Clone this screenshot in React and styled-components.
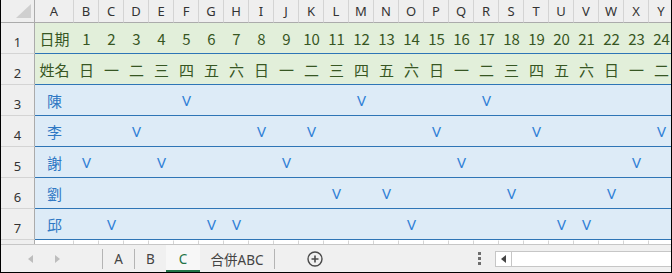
import React from 'react';
import styled, { createGlobalStyle, css } from 'styled-components';

const GlobalStyle = createGlobalStyle`
  body {
    margin: 0;
    background: #fff;
    font-family: "Noto Sans", "Noto Sans CJK TC", sans-serif;
  }
`;

const letters = 'ABCDEFGHIJKLMNOPQRSTUVWXY'.split('');
const weekdays = ['日', '一', '二', '三', '四', '五', '六'];
const days = Array.from({ length: 24 }, (_, i) => i + 1);

const people = [
  { name: '陳', marks: [5, 12, 17] },
  { name: '李', marks: [3, 8, 10, 15, 19, 24] },
  { name: '謝', marks: [1, 4, 9, 16, 23] },
  { name: '劉', marks: [11, 13, 18, 22] },
  { name: '邱', marks: [2, 6, 7, 14, 20, 21] },
];

const App = () => {
  return (
    <>
      <GlobalStyle />
      <Frame>
        <Sheet>
          <HeaderRow>
            <Corner>
              <CornerMark />
            </Corner>
            {letters.map((l, i) => (
              <ColHead key={l} $w={i === 0 ? 39 : 25}>
                {l}
              </ColHead>
            ))}
          </HeaderRow>

          <Row>
            <RowHead>1</RowHead>
            <Cell $w={39} $tone="green">日期</Cell>
            {days.map((d) => (
              <Cell key={d} $w={25} $tone="green">
                {d}
              </Cell>
            ))}
          </Row>

          <Row>
            <RowHead>2</RowHead>
            <Cell $w={39} $tone="green">姓名</Cell>
            {days.map((d) => (
              <Cell key={d} $w={25} $tone="green">
                {weekdays[(d - 1) % 7]}
              </Cell>
            ))}
          </Row>

          {people.map((p, i) => (
            <Row key={p.name}>
              <RowHead>{i + 3}</RowHead>
              <Cell $w={39} $tone="blue">{p.name}</Cell>
              {days.map((d) => (
                <Cell key={d} $w={25} $tone="blue">
                  {p.marks.includes(d) ? <Mark>V</Mark> : null}
                </Cell>
              ))}
            </Row>
          ))}

          <Row>
            <RowHead />
            <Cell $w={39} $tone="plain" />
            {days.map((d) => (
              <Cell key={d} $w={25} $tone="plain" />
            ))}
          </Row>
        </Sheet>

        <TabBar>
          <Nav>
            <Arrow $dir="left" />
            <Arrow $dir="right" />
          </Nav>
          <Sep />
          <Tab $w={31}>A</Tab>
          <Sep />
          <Tab $w={31}>B</Tab>
          <Tab $w={34} $active>C</Tab>
          <Tab $w={74}>合併ABC</Tab>
          <Sep />
          <AddButton>
            <svg width="16" height="16" viewBox="0 0 16 16">
              <circle cx="8" cy="8" r="7" fill="none" stroke="#4a4a4a" strokeWidth="1.4" />
              <path d="M8 4.5v7M4.5 8h7" stroke="#4a4a4a" strokeWidth="1.6" />
            </svg>
          </AddButton>
          <RightGroup>
            <Dots>
              <span />
              <span />
              <span />
            </Dots>
            <ScrollBox>
              <ScrollBtn>
                <svg width="6" height="8" viewBox="0 0 6 8">
                  <path d="M5 0L0 4l5 4z" fill="#444" />
                </svg>
              </ScrollBtn>
            </ScrollBox>
          </RightGroup>
        </TabBar>
      </Frame>
    </>
  );
};

export default App;

const Frame = styled.div`
  width: 672px;
  height: 273px;
  box-sizing: border-box;
  border-left: 1px solid #000;
  border-right: 1px solid #000;
  border-bottom: 1px solid #000;
  display: flex;
  flex-direction: column;
  overflow: hidden;
`;

const Sheet = styled.div`
  height: 244px;
  flex-shrink: 0;
  overflow: hidden;
  display: flex;
  flex-direction: column;
`;

const HeaderRow = styled.div`
  display: flex;
  height: 23px;
  flex-shrink: 0;
`;

const Corner = styled.div`
  width: 34px;
  flex-shrink: 0;
  box-sizing: border-box;
  background: #efefef;
  border-right: 1px solid #ababab;
  border-bottom: 1px solid #ababab;
  position: relative;
`;

const CornerMark = styled.div`
  position: absolute;
  right: 3px;
  bottom: 4px;
  width: 0;
  height: 0;
  border-left: 15px solid transparent;
  border-bottom: 14px solid #cfcfcf;
`;

const ColHead = styled.div`
  width: ${({ $w }) => $w}px;
  flex-shrink: 0;
  box-sizing: border-box;
  background: #efefef;
  border-right: 1px solid #d4d4d4;
  border-bottom: 1px solid #ababab;
  display: flex;
  align-items: center;
  justify-content: center;
  font-size: 13px;
  color: #333;
`;

const Row = styled.div`
  display: flex;
  height: 31px;
  flex-shrink: 0;
`;

const RowHead = styled.div`
  width: 34px;
  flex-shrink: 0;
  box-sizing: border-box;
  background: #efefef;
  border-right: 1px solid #ababab;
  border-bottom: 1px solid #d4d4d4;
  display: flex;
  align-items: flex-end;
  justify-content: center;
  padding-bottom: 2px;
  font-size: 13px;
  color: #333;
`;

const tones = {
  green: css`
    background: #e2efda;
    color: #375623;
    border-bottom: 1px solid #2e75b6;
  `,
  blue: css`
    background: #ddebf7;
    color: #2f78c4;
    border-bottom: 1px solid #2e75b6;
  `,
  plain: css`
    background: #fff;
    border-right: 1px solid #d4d4d4;
    border-top: 1px solid #fff;
  `,
};

const Cell = styled.div`
  width: ${({ $w }) => $w}px;
  flex-shrink: 0;
  box-sizing: border-box;
  display: flex;
  align-items: center;
  justify-content: center;
  white-space: nowrap;
  font-family: "Noto Sans CJK TC", "Noto Sans", sans-serif;
  font-size: 15px;
  ${({ $tone }) => tones[$tone]}
`;

const Mark = styled.span`
  font-family: "Noto Sans", sans-serif;
  font-size: 15px;
  color: #2f7fd6;
`;

const TabBar = styled.div`
  height: 28px;
  box-sizing: border-box;
  flex-shrink: 0;
  background: #f0f0f0;
  border-top: 1px solid #c6c6c6;
  display: flex;
  align-items: center;
`;

const Nav = styled.div`
  width: 101px;
  display: flex;
  align-items: center;
  padding-left: 27px;
  gap: 22px;
  box-sizing: border-box;
`;

const Arrow = styled.span`
  width: 0;
  height: 0;
  border-top: 4px solid transparent;
  border-bottom: 4px solid transparent;
  ${({ $dir }) =>
    $dir === 'left'
      ? 'border-right: 5px solid #bdbdbd;'
      : 'border-left: 5px solid #bdbdbd;'}
`;

const Sep = styled.div`
  width: 1px;
  height: 20px;
  background: #b4b4b4;
  flex-shrink: 0;
`;

const Tab = styled.div`
  width: ${({ $w }) => $w}px;
  height: 100%;
  box-sizing: border-box;
  display: flex;
  align-items: center;
  justify-content: center;
  font-family: "Noto Sans", "Noto Sans CJK TC", sans-serif;
  font-size: 13.5px;
  color: #444;
  padding-top: ${({ $active }) => ($active ? '2px' : '0')};
  ${({ $active }) =>
    $active &&
    css`
      color: #217346;
      border-bottom: 2px solid #217346;
      background: #f7f7f7;
    `}
`;

const AddButton = styled.div`
  margin-left: 32px;
  display: flex;
  align-items: center;
`;

const RightGroup = styled.div`
  margin-left: auto;
  width: 200px;
  flex-shrink: 0;
  display: flex;
  align-items: center;
  padding-left: 7px;
  box-sizing: border-box;
`;

const Dots = styled.div`
  display: flex;
  flex-direction: column;
  gap: 2px;
  span {
    width: 3px;
    height: 3px;
    background: #6e6e6e;
  }
`;

const ScrollBox = styled.div`
  margin-left: 14px;
  flex: 1;
  height: 16px;
  box-sizing: border-box;
  background: #fff;
  border: 1px solid #c6c6c6;
  border-right: none;
  display: flex;
`;

const ScrollBtn = styled.div`
  width: 16px;
  box-sizing: border-box;
  border-right: 1px solid #c6c6c6;
  display: flex;
  align-items: center;
  justify-content: center;
`;
